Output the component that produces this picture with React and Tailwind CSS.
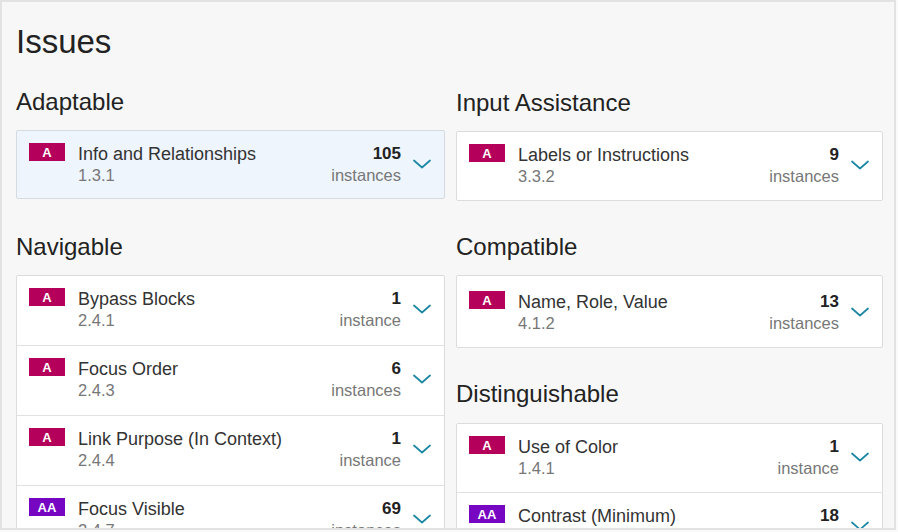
import React from "react";

const FONT = { fontFamily: '"Liberation Sans", Arial, Helvetica, sans-serif' };

function Chevron() {
  return (
    <svg width="18" height="10" viewBox="0 0 18 10" className="shrink-0">
      <path d="M1 1.5 L9 8.5 L17 1.5" fill="none" stroke="#1c87a2" strokeWidth="1.7" strokeLinecap="round" strokeLinejoin="round" />
    </svg>
  );
}

function Badge({ level }) {
  const aa = level === "AA";
  return (
    <div
      className={
        "w-[36px] h-[18px] shrink-0 flex items-center justify-center text-white font-bold text-[13px] leading-none " +
        (aa ? "bg-[#7606c2]" : "bg-[#b4005a]")
      }
    >
      {level}
    </div>
  );
}

function Row({ item, pt = "pt-[12px]", pb = "pb-[15px]", first }) {
  return (
    <div className={"flex items-center pl-[12px] pr-[13px] " + pt + " " + pb + (first ? "" : " border-t border-[#e1e1e1]")}>
      <div className="flex flex-1 items-start min-w-0">
        <Badge level={item.level} />
        <div className="ml-[13px] flex-1 min-w-0">
          <div className="text-[18px] leading-[22px] text-[#333333]">{item.title}</div>
          <div className="text-[16.5px] leading-[20px] text-[#777777]">{item.code}</div>
        </div>
        <div className="text-right">
          <div className="text-[17px] leading-[22px] font-bold text-[#222222]">{item.count}</div>
          <div className="text-[16.5px] leading-[20px] text-[#777777]">{item.count === 1 ? "instance" : "instances"}</div>
        </div>
      </div>
      <div className="ml-[12px]">
        <Chevron />
      </div>
    </div>
  );
}

function Heading({ children, className = "" }) {
  return <div className={"text-[24px] leading-[28px] text-[#222222] " + className}>{children}</div>;
}

export default function App() {
  return (
    <div className="w-[898px] h-[532px] bg-[#fafafa] overflow-hidden" style={FONT}>
      <div className="w-[896px] h-[530px] border-2 border-[#e2e2e2] bg-[#f7f7f7] overflow-hidden pl-[14px] pr-[11px] pt-[20px]">
        <div className="text-[33px] leading-[40px] text-[#222222]">Issues</div>
        <div className="flex gap-[11px]">
          <div className="w-[429px] shrink-0">
            <Heading className="mt-[26px]">Adaptable</Heading>
            <div className="mt-[14px] border border-[#d6dbe0] bg-[#eef5fd] rounded-[2px]">
              <Row first pb="pb-[13px]" item={{ level: "A", title: "Info and Relationships", code: "1.3.1", count: 105 }} />
            </div>
            <Heading className="mt-[34px]">Navigable</Heading>
            <div className="mt-[14px] border border-[#dcdcdc] bg-white rounded-[2px]">
              <Row first item={{ level: "A", title: "Bypass Blocks", code: "2.4.1", count: 1 }} />
              <Row item={{ level: "A", title: "Focus Order", code: "2.4.3", count: 6 }} />
              <Row item={{ level: "A", title: "Link Purpose (In Context)", code: "2.4.4", count: 1 }} />
              <Row item={{ level: "AA", title: "Focus Visible", code: "2.4.7", count: 69 }} />
            </div>
          </div>
          <div className="w-[427px] shrink-0">
            <Heading className="mt-[27px]">Input Assistance</Heading>
            <div className="mt-[14px] border border-[#dcdcdc] bg-white rounded-[2px]">
              <Row first pb="pb-[14px]" item={{ level: "A", title: "Labels or Instructions", code: "3.3.2", count: 9 }} />
            </div>
            <Heading className="mt-[32px]">Compatible</Heading>
            <div className="mt-[14px] border border-[#dcdcdc] bg-white rounded-[2px]">
              <Row first pt="pt-[15px]" pb="pb-[14px]" item={{ level: "A", title: "Name, Role, Value", code: "4.1.2", count: 13 }} />
            </div>
            <Heading className="mt-[32px]">Distinguishable</Heading>
            <div className="mt-[15px] border border-[#dcdcdc] bg-white rounded-[2px]">
              <Row first pb="pb-[14px]" item={{ level: "A", title: "Use of Color", code: "1.4.1", count: 1 }} />
              <Row item={{ level: "AA", title: "Contrast (Minimum)", code: "1.4.3", count: 18 }} />
            </div>
          </div>
        </div>
      </div>
    </div>
  );
}
